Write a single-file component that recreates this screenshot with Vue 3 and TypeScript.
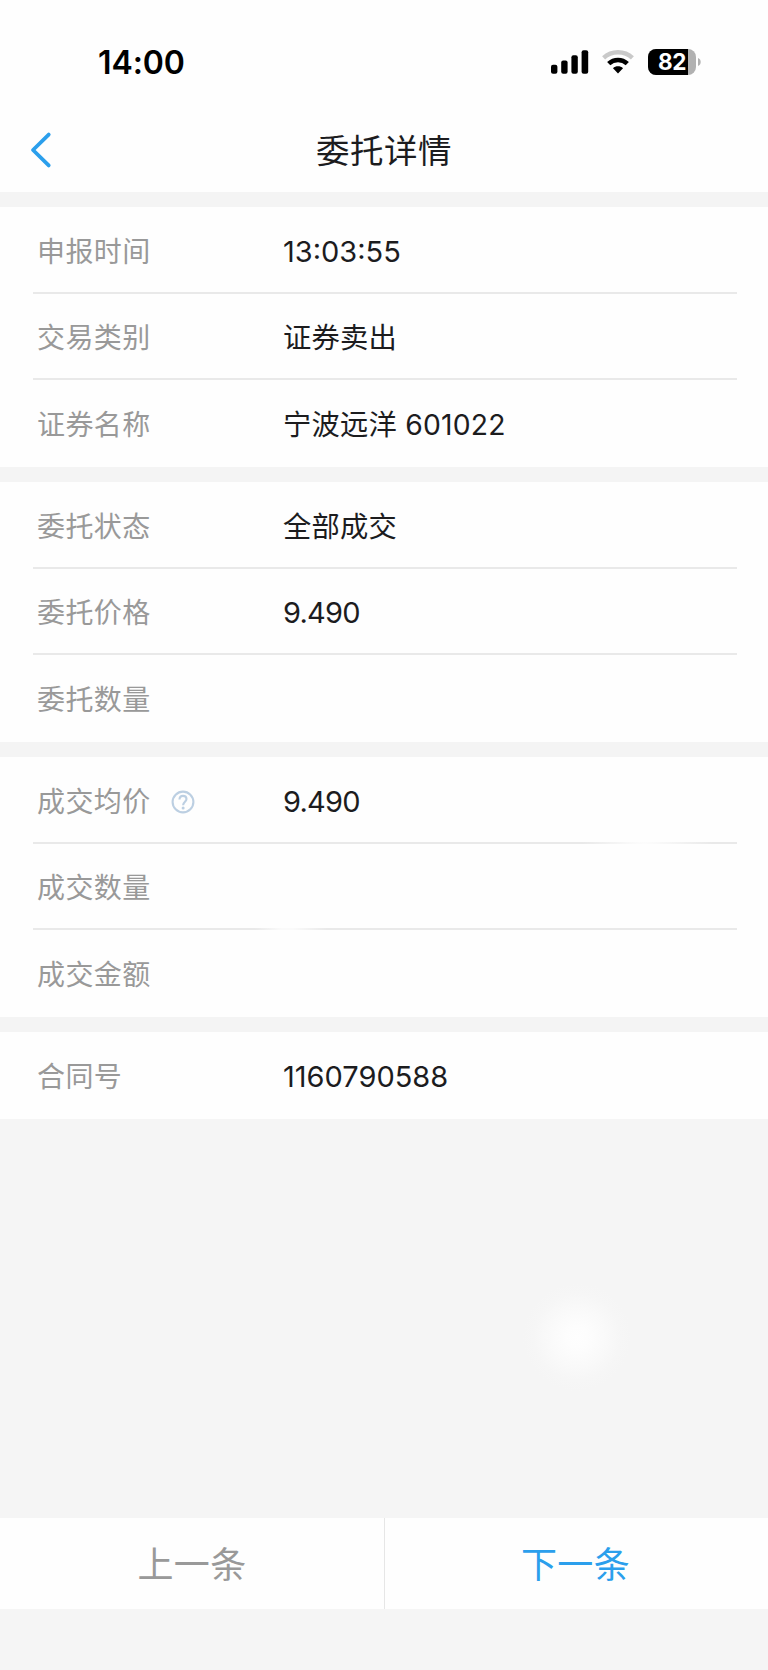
<script setup lang="ts">
interface Row {
  label: string
  value: string
  kind?: 'number' | 'price'
  help?: boolean
  fade?: 'right' | 'left'
}

const groups: Row[][] = [
  [
    { label: '申报时间', value: '13:03:55', kind: 'number' },
    { label: '交易类别', value: '证券卖出' },
    { label: '证券名称', value: '宁波远洋 601022' },
  ],
  [
    { label: '委托状态', value: '全部成交' },
    { label: '委托价格', value: '9.490', kind: 'price' },
    { label: '委托数量', value: '' },
  ],
  [
    { label: '成交均价', value: '9.490', kind: 'price', help: true, fade: 'right' },
    { label: '成交数量', value: '', fade: 'left' },
    { label: '成交金额', value: '' },
  ],
  [{ label: '合同号', value: '1160790588', kind: 'number' }],
]
</script>

<template>
  <div class="screen">
    <header class="top">
      <div class="status">
        <span class="time">14:00</span>
        <div class="indicators">
          <svg class="signal" width="38" height="24" viewBox="0 0 38 24">
            <rect x="0" y="14.8" width="6.4" height="8.9" rx="2" />
            <rect x="10.2" y="10.4" width="6.4" height="13.3" rx="2" />
            <rect x="20.4" y="5.2" width="6.4" height="18.5" rx="2" />
            <rect x="30.6" y="0.2" width="6.6" height="23.5" rx="2" />
          </svg>
          <svg class="wifi" width="32" height="24" viewBox="0 0 32 24" fill="none">
            <path d="M1.6 7.8C9.6 0.4 22.4 0.4 30.4 7.8" stroke="#c9c9c9" stroke-width="4.4" />
            <path d="M6.7 13.7C12 8.7 20 8.7 25.3 13.7" stroke="#000" stroke-width="4.6" />
            <path d="M16 23.4L11 18.3C13.7 15.7 18.3 15.7 21 18.3Z" fill="#000" />
          </svg>
          <div class="battery">
            <span class="cell"><span class="charge">82</span></span>
            <svg width="3" height="8" viewBox="0 0 3 8"><path d="M0 0C3.6 1.3 3.6 6.7 0 8Z" fill="#b1b1b1" /></svg>
          </div>
        </div>
      </div>
      <nav class="nav">
        <svg class="back" width="24" height="40" viewBox="0 0 24 40" fill="none">
          <path d="M20.7 4.6L5 20L20.7 35.4" stroke="#2b9fec" stroke-width="3.8" stroke-linecap="round" stroke-linejoin="round" />
        </svg>
        <h1 class="title">委托详情</h1>
      </nav>
    </header>

    <main class="groups">
      <section v-for="(rows, g) in groups" :key="g" class="group">
        <div v-for="row in rows" :key="row.label" class="row" :class="row.fade ? `fade-${row.fade}` : ''">
          <div class="label">
            <span>{{ row.label }}</span>
            <svg v-if="row.help" class="help" width="24" height="24" viewBox="0 0 24 24" fill="none" stroke="#bccfe2">
              <circle cx="12" cy="12" r="10.4" stroke-width="2.1" />
              <path d="M8.5 9.6C8.5 7.2 9.9 5.9 12 5.9C14.1 5.9 15.5 7.2 15.5 9.1C15.5 11.6 12.1 11.9 12.1 15.2" stroke-width="2.1" />
              <circle cx="12.1" cy="18" r="1.5" fill="#bccfe2" stroke="none" />
            </svg>
          </div>
          <div class="value" :class="row.kind">{{ row.value }}</div>
        </div>
      </section>
    </main>

    <div class="blank"><i class="glow"></i></div>

    <footer class="pager">
      <button class="page prev" type="button">上一条</button>
      <button class="page next" type="button">下一条</button>
    </footer>
  </div>
</template>

<style>
body {
  margin: 0;
  background: #f5f5f5;
}
</style>

<style scoped>
.screen {
  box-sizing: border-box;
  width: 768px;
  height: 1670px;
  padding-bottom: 61px;
  display: flex;
  flex-direction: column;
  background: #f5f5f5;
  color: #1c1c1e;
  font-family: Inter, "Noto Sans CJK SC", sans-serif;
  overflow: hidden;
}
.top {
  height: 192px;
  background: #fefefe;
}
.status {
  height: 108px;
  padding: 17px 67px 0 98px;
  box-sizing: border-box;
  display: flex;
  justify-content: space-between;
  align-items: center;
}
.time {
  padding-top: 1px;
  color: #000;
  font-size: 32px;
  font-weight: 600;
  line-height: 40px;
  letter-spacing: -0.1px;
}
.indicators {
  padding-bottom: 1px;
  display: flex;
  align-items: center;
}
.wifi {
  margin: 0 14px 0 13px;
}
.battery {
  display: flex;
  align-items: center;
  gap: 2px;
}
.cell {
  width: 48px;
  height: 26px;
  border-radius: 8px;
  overflow: hidden;
  background: #b1b1b1;
}
.charge {
  display: block;
  box-sizing: border-box;
  width: 40px;
  height: 26px;
  padding-left: 10px;
  background: #000;
  color: #fff;
  font-size: 22.5px;
  font-weight: 700;
  line-height: 26px;
  letter-spacing: -0.5px;
}
.nav {
  height: 84px;
  padding: 0 28px;
  display: grid;
  grid-template-columns: 24px 1fr 24px;
  align-items: center;
}
.title {
  margin: 0;
  padding-top: 1px;
  text-align: center;
  font-size: 33.5px;
  font-weight: 400;
  line-height: 48px;
  letter-spacing: 0.5px;
}
.groups {
  padding-top: 15px;
  display: flex;
  flex-direction: column;
  gap: 15px;
  background: #f4f4f4;
}
.group {
  background: #fefefe;
}
.row {
  --line: #e9e9e9;
  box-sizing: border-box;
  height: 86.5px;
  margin: 0 31px 0 33px;
  padding: 3px 0 0 4px;
  display: grid;
  grid-template-columns: 246px 1fr;
  align-items: center;
  font-size: 28px;
  line-height: 40px;
}
.row:not(:last-child) {
  background: linear-gradient(var(--line), var(--line)) 0 100% / 100% 2px no-repeat;
}
.row:last-child {
  height: 87px;
}
.row.fade-right {
  background-image: linear-gradient(90deg, #e9e9e9 550px, #fafafa 600px, #fcfcfc 612px, #fafafa 622px, #e9e9e9 680px);
}
.row.fade-left {
  background-image: linear-gradient(90deg, #e9e9e9 222px, #fafafa 248px, #fafafa 260px, #e9e9e9 294px);
}
.label {
  display: flex;
  align-items: center;
  color: #999;
  letter-spacing: 0.4px;
}
.help {
  margin-left: 20px;
}
.value {
  font-size: 28.3px;
  letter-spacing: 0.2px;
  white-space: pre;
}
.value.number {
  font-size: 29px;
  letter-spacing: 0;
}
.value.price {
  font-size: 29px;
  letter-spacing: -0.75px;
}
.blank {
  position: relative;
  flex: 1;
}
.glow {
  position: absolute;
  left: 523px;
  top: 164px;
  width: 108px;
  height: 108px;
  background: radial-gradient(circle closest-side, #fefefe 0, #fdfdfd 20%, #f9f9f9 56%, #f6f6f6 80%, #f5f5f5 100%);
}
.pager {
  height: 91px;
  display: grid;
  grid-template-columns: 384px 384px;
  background: #fefefe;
}
.page {
  border: 0;
  padding: 3px 0 0 0;
  background: none;
  font: inherit;
  font-size: 36px;
  line-height: 88px;
  letter-spacing: 0.3px;
}
.prev {
  color: #999;
}
.next {
  padding-right: 2px;
  border-left: 1px solid #e6e6e6;
  color: #2b9fec;
}
</style>
